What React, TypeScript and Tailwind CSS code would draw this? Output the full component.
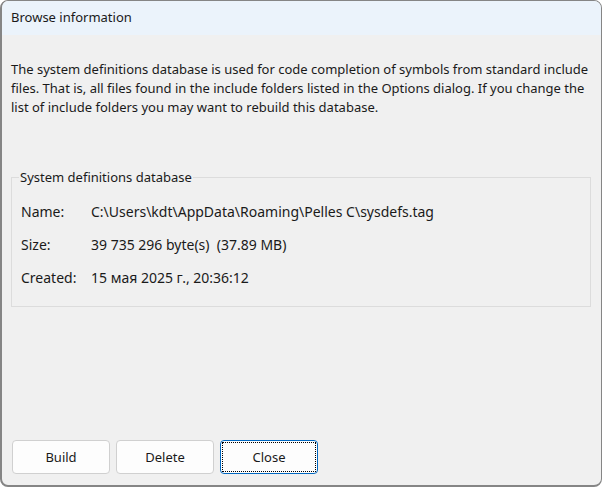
const rows = [
  { label: "Name:", value: "C:\\Users\\kdt\\AppData\\Roaming\\Pelles C\\sysdefs.tag" },
  { label: "Size:", value: "39 735 296 byte(s)  (37.89 MB)" },
  { label: "Created:", value: "15 мая 2025 г., 20:36:12" },
];

const Button = ({ text, focused }: { text: string; focused?: boolean }) => {
  return (
    <button
      className={
        focused
          ? "w-[98px] h-[34px] rounded-[4px] border border-[#0067c0] bg-[#fdfdfd] p-[1px]"
          : "w-[98px] h-[34px] rounded-[4px] border border-[#d0d0d0] bg-[#fdfdfd] p-[1px]"
      }
    >
      <span
        className={
          focused
            ? "flex size-full items-center justify-center border border-dotted border-black pt-[1px] text-[13px] text-[#1a1a1a]"
            : "flex size-full items-center justify-center pt-[1px] text-[13px] text-[#1a1a1a]"
        }
      >
        {text}
      </span>
    </button>
  );
};

export default function App() {
  return (
    <div className="w-[602px] h-[487px] bg-white font-['Noto_Sans',sans-serif]">
      <div className="size-full flex flex-col overflow-hidden rounded-[8px] border border-l-2 border-b-2 border-[#858585] bg-[#f0f0f0]">
        <div className="h-[34px] shrink-0 bg-[#ebf3fb] pl-[9px] pt-[7px] text-[13px] text-[#1a1a1a]">
          Browse information
        </div>

        <div className="flex flex-1 flex-col px-[9px] pt-[25px] text-[13px] text-[#1a1a1a]">
          <p className="leading-[19px] whitespace-nowrap">
            The system definitions database is used for code completion of symbols from standard include
            <br />
            files. That is, all files found in the include folders listed in the Options dialog. If you change the
            <br />
            list of include folders you may want to rebuild this database.
          </p>

          <fieldset className="mt-[53px] mr-[1px] h-[137px] border border-[#dcdcdc] pl-[9px] pt-[17px]">
            <legend className="ml-[-2px] px-[1px] text-[13px] leading-[14px]">System definitions database</legend>
            <div className="flex flex-col gap-[13px] text-[14px]">
              {rows.map((r) => (
                <div key={r.label} className="flex h-[20px] items-center">
                  <span className="w-[70px]">{r.label}</span>
                  <span className="whitespace-pre">{r.value}</span>
                </div>
              ))}
            </div>
          </fieldset>

          <div className="mt-auto mb-[11px] ml-[1px] flex gap-[6px]">
            <Button text="Build" />
            <Button text="Delete" />
            <Button text="Close" focused />
          </div>
        </div>
      </div>
    </div>
  );
}
